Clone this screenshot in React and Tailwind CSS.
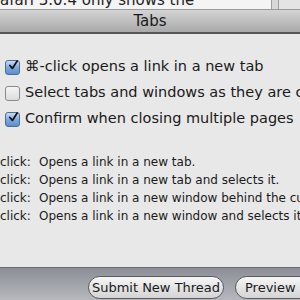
const CheckRow = ({ checked, children }) => (
    <div className="flex items-center h-[26px] gap-[5px] pl-[5px] whitespace-nowrap">
        {checked ? (
            <span className="w-[15px] h-[15px] shrink-0 rounded-[3px] border border-[#4a6f9c] bg-gradient-to-b from-[#c9ddf3] via-[#7fa9dc] to-[#5a8dd0] flex items-center justify-center">
                <svg width="15" height="15" viewBox="0 0 15 15" className="-mt-[4px] ml-[2px]">
                    <path d="M2.5 7.5 L6 11.5 L12.5 1.5" fill="none" stroke="#111" strokeWidth="2.4" strokeLinecap="round" strokeLinejoin="round" />
                </svg>
            </span>
        ) : (
            <span className="w-[15px] h-[15px] shrink-0 rounded-[3px] border border-[#8a8a8a] bg-gradient-to-b from-[#f4f4f4] to-[#dcdcdc]" />
        )}
        <span className="text-[14.5px] text-[#1a1a1a]">{children}</span>
    </div>
);

const DescRow = ({ text }) => (
    <div className="flex h-[18px] items-center whitespace-nowrap text-[12px] text-[#1a1a1a]">
        <span className="w-[39px] shrink-0">click:</span>
        <span>{text}</span>
    </div>
);

const App = () => {
    return (
        <div className="w-[300px] h-[300px] overflow-hidden flex flex-col bg-[#e8e8e8]" style={{ fontFamily: '"DejaVu Sans", "Liberation Sans", sans-serif' }}>
            <div className="h-[10px] shrink-0 relative bg-[#f4f4f4] border-b border-[#9a9a9a] overflow-hidden">
                <div className="absolute left-0 -top-[11px] text-[15px] text-[#222] whitespace-nowrap">afari 3.0.4 only shows the</div>
                <div className="absolute left-[271px] top-0 h-full w-[8px] border-x border-[#a0a0a0] bg-[#d8d8d8]" />
                <div className="absolute left-[279px] top-0 h-full w-[21px] bg-[#e4e4e4]" />
            </div>
            <div className="h-[24px] shrink-0 bg-gradient-to-b from-[#d4d4d4] to-[#a9a9a9] border-b-2 border-[#555] flex items-center justify-center">
                <span className="text-[15px] text-[#1a1a1a]">Tabs</span>
            </div>
            <div className="flex-1 pt-[20px]">
                <CheckRow checked>⌘-click opens a link in a new tab</CheckRow>
                <CheckRow>Select tabs and windows as they are created</CheckRow>
                <CheckRow checked>Confirm when closing multiple pages</CheckRow>
                <div className="mt-[21px]">
                    <DescRow text="Opens a link in a new tab." />
                    <DescRow text="Opens a link in a new tab and selects it." />
                    <DescRow text="Opens a link in a new window behind the current window." />
                    <DescRow text="Opens a link in a new window and selects it." />
                </div>
            </div>
            <div className="h-[33px] shrink-0 border-t border-[#6a6a70] bg-gradient-to-b from-[#8c8e96] to-[#b6b8be] flex items-end gap-[11px] pl-[88px] pb-[1px] whitespace-nowrap">
                <button className="h-[23px] w-[136px] rounded-full border border-[#5a5a5a] bg-gradient-to-b from-[#f6f6f6] to-[#d4d4d4] text-[13px] text-[#1a1a1a] leading-none shrink-0">Submit New Thread</button>
                <button className="h-[23px] px-[9px] rounded-full border border-[#5a5a5a] bg-gradient-to-b from-[#f6f6f6] to-[#d4d4d4] text-[13px] text-[#1a1a1a] leading-none shrink-0">Preview Post</button>
            </div>
        </div>
    );
};

export default App;
